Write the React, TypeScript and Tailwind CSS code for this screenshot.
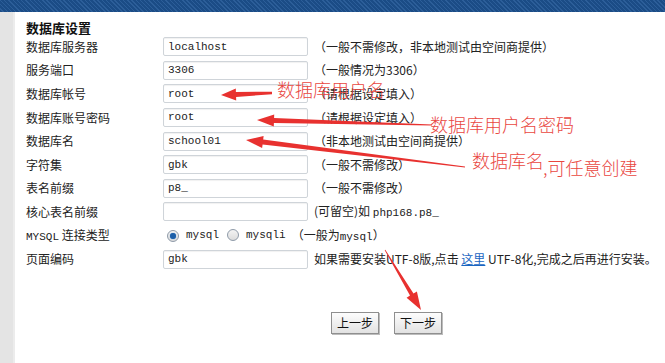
import React from "react";

type Pt = [number, number];

function arrowPoints(T: Pt, P: Pt, L: number, H: number, S: number, s0: number) {
  const dx = P[0] - T[0];
  const dy = P[1] - T[1];
  const len = Math.hypot(dx, dy);
  const d = [dx / len, dy / len];
  const n = [-d[1], d[0]];
  const B = [P[0] - d[0] * L, P[1] - d[1] * L];
  const pts: number[][] = [
    [T[0] + n[0] * s0, T[1] + n[1] * s0],
    [B[0] + n[0] * S, B[1] + n[1] * S],
    [B[0] + n[0] * H, B[1] + n[1] * H],
    [P[0], P[1]],
    [B[0] - n[0] * H, B[1] - n[1] * H],
    [B[0] - n[0] * S, B[1] - n[1] * S],
    [T[0] - n[0] * s0, T[1] - n[1] * s0],
  ];
  return pts.map((p) => `${p[0].toFixed(1)},${p[1].toFixed(1)}`).join(" ");
}

const cjk = "font-['SimSun','Noto_Sans_CJK_SC',sans-serif]";

function Row({ label, value, hint, children }: { label: React.ReactNode; value?: string; hint?: React.ReactNode; children?: React.ReactNode }) {
  return (
    <div className="flex h-[23.6px] items-center">
      <div className={`w-[137px] text-[12px] text-[#222] ${cjk}`}>{label}</div>
      {children ?? (
        <>
          <div className="flex h-[19px] w-[145px] items-center rounded-[2px] border border-[#cfd4d9] bg-white pl-[4px] shadow-[inset_0_1px_1px_rgba(0,0,0,0.06)]">
            <span className="font-['Liberation_Mono',monospace] text-[11px] text-[#222]">{value}</span>
          </div>
          <div className={`ml-[6px] text-[12px] text-[#222] ${cjk}`}>{hint}</div>
        </>
      )}
    </div>
  );
}

function Radio({ checked }: { checked?: boolean }) {
  return (
    <span className="inline-flex h-[12px] w-[12px] items-center justify-center rounded-full border border-[#8e9aa8] bg-gradient-to-b from-[#f4f4f4] to-[#dcdcdc]">
      {checked && <span className="h-[6px] w-[6px] rounded-full bg-[#1d5fa8] shadow-[0_0_1px_#3a86d6]" />}
    </span>
  );
}

export default function App() {
  return (
    <div className="relative h-[363px] w-[665px] overflow-hidden bg-white">
      <div className="h-[12px] w-full bg-[repeating-linear-gradient(45deg,#1b4c86_0px,#1b4c86_2px,#2c5e99_2px,#2c5e99_3px)]" />
      <div className="flex h-[351px]">
        <div className="w-[15px] border-r-2 border-[#ececec] bg-[#e4e4e4]" />
        <div className="flex-1 pl-[11px] pt-[8px]">
          <div className={`h-[15px] text-[13px] font-bold leading-[15px] text-[#111] ${cjk}`}>数据库设置</div>
          <Row label="数据库服务器" value="localhost" hint="（一般不需修改，非本地测试由空间商提供）" />
          <Row label="服务端口" value="3306" hint="（一般情况为3306）" />
          <Row label="数据库帐号" value="root" hint="（请根据设定填入）" />
          <Row label="数据库账号密码" value="root" hint="（请根据设定填入）" />
          <Row label="数据库名" value="school01" hint="（非本地测试由空间商提供）" />
          <Row label="字符集" value="gbk" hint="（一般不需修改）" />
          <Row label="表名前缀" value="p8_" hint="（一般不需修改）" />
          <Row
            label="核心表名前缀"
            value=""
            hint={
              <span>
                (可留空)如 <span className="font-['Liberation_Mono',monospace] text-[11px]">php168.p8_</span>
              </span>
            }
          />
          <Row
            label={
              <span>
                <span className="font-['Liberation_Mono',monospace] text-[11px]">MYSQL</span> 连接类型
              </span>
            }
          >
            <div className={`flex items-center pl-[4px] text-[12px] text-[#222] ${cjk}`}>
              <Radio checked />
              <span className="ml-[7px] font-['Liberation_Mono',monospace] text-[11px]">mysql</span>
              <span className="ml-[8px]"><Radio /></span>
              <span className="ml-[7px] font-['Liberation_Mono',monospace] text-[11px]">mysqli</span>
              <span className="ml-[6px]">（一般为<span className="font-['Liberation_Mono',monospace] text-[11px]">mysql</span>）</span>
            </div>
          </Row>
          <Row
            label="页面编码"
            value="gbk"
            hint={
              <span>
                如果需要安装UTF-8版,点击 <span className="text-[#1a66c2] underline">这里</span> UTF-8化,完成之后再进行安装。
              </span>
            }
          />
          <div className="mt-[41px] flex gap-[15px] pl-[305px]">
            <button className={`h-[22px] w-[48px] border border-[#8f8f8f] bg-gradient-to-b from-[#fdfdfd] to-[#e2e2e2] text-[12px] text-[#111] shadow-[1px_1px_0_#bcbcbc] ${cjk}`}>上一步</button>
            <button className={`h-[22px] w-[48px] border border-[#8f8f8f] bg-gradient-to-b from-[#fdfdfd] to-[#e2e2e2] text-[12px] text-[#111] shadow-[1px_1px_0_#bcbcbc] ${cjk}`}>下一步</button>
          </div>
        </div>
      </div>

      <svg className="pointer-events-none absolute left-0 top-0" width="665" height="363">
        <polygon fill="#e8312f" points={arrowPoints([272, 93], [221, 95], 15, 6, 2.5, 1.2)} />
        <polygon fill="#e8312f" points={arrowPoints([432, 125], [257, 120], 17, 6, 2.5, 0.4)} />
        <polygon fill="#e8312f" points={arrowPoints([465, 167], [246, 140], 17, 6, 2.5, 0.4)} />
        <polygon fill="#e8312f" points={arrowPoints([385, 250], [421, 310], 18, 6, 2, 0.4)} />
      </svg>
      <div className="pointer-events-none absolute left-[277px] top-[79px] font-['Noto_Sans_CJK_SC',sans-serif] text-[18px] font-light leading-[20px] text-[#e9473f]">数据库用户名</div>
      <div className="pointer-events-none absolute left-[430px] top-[114px] font-['Noto_Sans_CJK_SC',sans-serif] text-[18px] font-light leading-[20px] text-[#e9473f]">数据库用户名密码</div>
      <div className="pointer-events-none absolute left-[472px] top-[150px] font-['Noto_Sans_CJK_SC',sans-serif] text-[18px] font-light leading-[20px] text-[#e9473f]">数据库名</div>
      <div className="pointer-events-none absolute left-[543px] top-[157px] font-['Noto_Sans_CJK_SC',sans-serif] text-[18px] font-light leading-[20px] text-[#e9473f]">,可任意创建</div>
    </div>
  );
}
